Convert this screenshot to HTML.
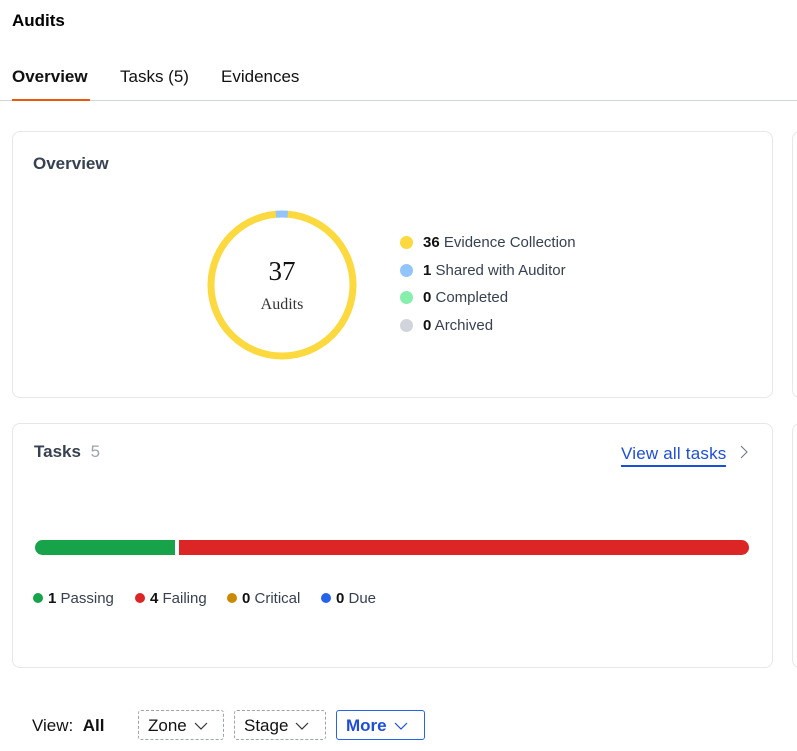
<!DOCTYPE html>
<html><head><meta charset="utf-8"><style>
*{box-sizing:border-box;margin:0;padding:0}
body{width:797px;height:751px;background:#fff;font-family:"Liberation Sans",Arial,sans-serif;color:#1f2937;position:relative;overflow:hidden}
.a{position:absolute}
.card{position:absolute;border:1px solid #e5e7eb;border-radius:8px;background:#fff}
.dot{display:inline-block;border-radius:50%}
.leg div{position:absolute;font-size:15px;color:#374151;white-space:nowrap}
.leg b{color:#111}
.btn{position:absolute;top:710px;height:30px;border:1px dashed #9ca3af;border-radius:3px;font-size:17px;color:#111;padding:5px 9px;white-space:nowrap}
.btn svg{margin-left:7px;vertical-align:1px}
</style></head><body>
<div class="a" style="left:12px;top:11px;font-weight:bold;font-size:17px;color:#000">Audits</div>
<div class="a" style="left:12px;top:67px;font-weight:bold;font-size:17px;color:#111">Overview</div>
<div class="a" style="left:120px;top:67px;font-size:17px;color:#111">Tasks (5)</div>
<div class="a" style="left:221px;top:67px;font-size:17px;color:#111">Evidences</div>
<div class="a" style="left:0;top:100px;width:797px;height:1px;background:#d1d5db"></div>
<div class="a" style="left:12px;top:99px;width:78px;height:2px;background:#ea580c"></div>

<div class="card" style="left:12px;top:131px;width:761px;height:267px"></div>
<div class="card" style="left:792px;top:131px;width:40px;height:267px"></div>
<div class="a" style="left:33px;top:154px;font-weight:bold;font-size:17px;color:#374151">Overview</div>
<svg class="a" style="left:205px;top:208px" width="154" height="154">
<circle cx="77" cy="77" r="71" fill="none" stroke="#fcd93f" stroke-width="7"/>
<circle cx="77" cy="77" r="71" fill="none" stroke="#93c5fd" stroke-width="7" stroke-dasharray="12 500" transform="rotate(-95 77 77)"/>
<text x="77" y="72" text-anchor="middle" font-family="Liberation Serif,serif" font-size="27" fill="#111">37</text>
<text x="77" y="101" text-anchor="middle" font-family="Liberation Serif,serif" font-size="16" fill="#333">Audits</text>
</svg>
<div class="leg">
<div style="left:400px;top:234px"><span class="dot" style="width:13px;height:13px;background:#fcd93f;vertical-align:-2px;margin-right:10px"></span><b>36</b> Evidence Collection</div>
<div style="left:400px;top:262px"><span class="dot" style="width:13px;height:13px;background:#93c5fd;vertical-align:-2px;margin-right:10px"></span><b>1</b> Shared with Auditor</div>
<div style="left:400px;top:289px"><span class="dot" style="width:13px;height:13px;background:#86efac;vertical-align:-2px;margin-right:10px"></span><b>0</b> Completed</div>
<div style="left:400px;top:317px"><span class="dot" style="width:13px;height:13px;background:#d1d5db;vertical-align:-2px;margin-right:10px"></span><b>0</b> Archived</div>
</div>

<div class="card" style="left:12px;top:423px;width:761px;height:245px"></div>
<div class="card" style="left:792px;top:423px;width:40px;height:245px"></div>
<div class="a" style="left:34px;top:442px;font-weight:bold;font-size:17px;color:#374151">Tasks <span style="font-weight:normal;color:#9ca3af;margin-left:5px">5</span></div>
<div class="a" style="left:621px;top:444px;font-size:17px;color:#1d4ed8;border-bottom:2px solid #1d4ed8;padding-bottom:1px;font-weight:500;letter-spacing:0.2px">View all tasks</div>
<svg class="a" style="left:738px;top:444px" width="12" height="16"><path d="M3 2l6 6-6 6" fill="none" stroke="#6b7280" stroke-width="1"/></svg>
<div class="a" style="left:35px;top:540px;width:140px;height:15px;background:#16a34a;border-radius:8px 0 0 8px"></div>
<div class="a" style="left:179px;top:540px;width:570px;height:15px;background:#dc2626;border-radius:0 8px 8px 0"></div>
<div class="leg">
<div style="left:33px;top:590px"><span class="dot" style="width:10px;height:10px;background:#16a34a;margin-right:5px"></span><b>1</b> Passing</div>
<div style="left:135px;top:590px"><span class="dot" style="width:10px;height:10px;background:#dc2626;margin-right:5px"></span><b>4</b> Failing</div>
<div style="left:227px;top:590px"><span class="dot" style="width:10px;height:10px;background:#ca8a04;margin-right:5px"></span><b>0</b> Critical</div>
<div style="left:321px;top:590px"><span class="dot" style="width:10px;height:10px;background:#2563eb;margin-right:5px"></span><b>0</b> Due</div>
</div>

<div class="a" style="left:32px;top:716px;font-size:17px;color:#111">View: &nbsp;<b>All</b></div>
<div class="btn" style="left:138px;width:86px">Zone<svg width="14" height="8"><path d="M1 1l6 6 6-6" fill="none" stroke="#333" stroke-width="1.2"/></svg></div>
<div class="btn" style="left:234px;width:92px">Stage<svg width="14" height="8"><path d="M1 1l6 6 6-6" fill="none" stroke="#333" stroke-width="1.2"/></svg></div>
<div class="btn" style="left:336px;width:89px;border:1px solid #2563eb;color:#1d4ed8;font-weight:bold">More<svg width="14" height="8"><path d="M1 1l6 6 6-6" fill="none" stroke="#1d4ed8" stroke-width="1.2"/></svg></div>
</body></html>
